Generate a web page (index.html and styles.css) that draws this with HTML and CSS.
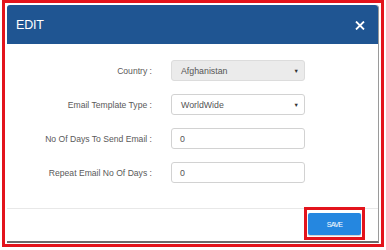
FILE: index.html
```html
<!DOCTYPE html>
<html>
<head>
<meta charset="utf-8">
<link rel="stylesheet" href="styles.css">
</head>
<body>
<div class="frame">
  <div class="modal">
    <div class="modal-header">
      <span class="title">EDIT</span>
      <svg class="close" width="10" height="9" viewBox="0 0 10 9"><path d="M1 0.5 L9 8.5 M9 0.5 L1 8.5" stroke="#fff" stroke-width="1.8" fill="none"/></svg>
    </div>
    <div class="modal-body">
      <div class="form">
        <label class="lbl">Country :</label>
        <div class="ctrl select disabled"><span>Afghanistan</span><span class="caret">&#9660;</span></div>
        <label class="lbl">Email Template Type :</label>
        <div class="ctrl select"><span>WorldWide</span><span class="caret">&#9660;</span></div>
        <label class="lbl">No Of Days To Send Email :</label>
        <div class="ctrl input"><span>0</span></div>
        <label class="lbl">Repeat Email No Of Days :</label>
        <div class="ctrl input"><span>0</span></div>
      </div>
    </div>
    <div class="modal-footer">
      <div class="mark"><button class="save">SAVE</button></div>
    </div>
  </div>
</div>
</body>
</html>
```
FILE: styles.css
```css
html, body { margin: 0; padding: 0; background: #fff; }
body { font-family: "Liberation Sans", Arial, sans-serif; width: 386px; height: 250px; overflow: hidden; }
.frame {
  margin-left: 2px;
  width: 382px;
  height: 247px;
  box-sizing: border-box;
  border: 3px solid #e3141c;
  padding: 2px 2px 1px 2px;
}
.modal {
  width: 372px;
  height: 238px;
  box-sizing: border-box;
  background: #fff;
  border-right: 1px solid #9a9a9a;
  border-bottom: 2px solid #6a6a6a;
  border-radius: 3px 3px 0 0;
  display: flex;
  flex-direction: column;
}
.modal-header {
  height: 39px;
  flex: none;
  background: #1f5592;
  border-radius: 3px 3px 0 0;
  display: flex;
  align-items: center;
  justify-content: space-between;
  padding: 0 13px 0 9px;
}
.title { color: #fff; font-size: 12.5px; letter-spacing: -0.2px; }
.close { display: block; margin-top: 1px; }
.modal-body {
  padding: 16px 0 25px 0;
  border-bottom: 1px solid #e8e8e8;
}
.form {
  display: grid;
  grid-template-columns: 145px 134px;
  column-gap: 19px;
  row-gap: 13px;
}
.lbl {
  font-size: 8.6px;
  color: #5a5a5a;
  text-align: right;
  align-self: center;
}
.ctrl {
  height: 21px;
  box-sizing: border-box;
  border: 1px solid #d2d2d2;
  border-radius: 3px;
  display: flex;
  align-items: center;
  justify-content: space-between;
  font-size: 8.8px;
  color: #555;
  background: #fff;
}
.select { padding: 0 5px 0 9px; }
.input { padding: 0 8px; }
.disabled { background: #ebebeb; border-color: #dcdcdc; }
.caret { font-size: 5.5px; color: #333; }
.modal-footer {
  flex: 1;
  display: flex;
  justify-content: flex-end;
  align-items: flex-start;
  padding-right: 13px;
}
.mark {
  margin-top: -2px;
  border: 3px solid #e3141c;
  padding: 3px 1px 2px 1px;
  display: flex;
}
.save {
  width: 53px;
  height: 22px;
  border: none;
  border-radius: 2px;
  background: #2587e0;
  color: #fff;
  font-family: "Liberation Sans", Arial, sans-serif;
  font-size: 7px;
  letter-spacing: -0.7px;
  padding: 0;
  box-shadow: 0 1px 1px rgba(0,0,0,0.2);
}
```
